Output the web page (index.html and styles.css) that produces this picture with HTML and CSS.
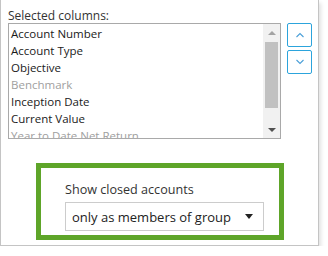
FILE: index.html
```html
<!DOCTYPE html>
<html lang="en">
<head>
    <meta charset="UTF-8">
    <title>Columns</title>
    <link rel="stylesheet" href="styles.css">
</head>
<body>
    <div class="panel">
        <div class="label">Selected columns:</div>
        <div class="top-row">
            <div class="listbox">
                <ul class="items">
                    <li>Account Number</li>
                    <li>Account Type</li>
                    <li>Objective</li>
                    <li class="disabled">Benchmark</li>
                    <li>Inception Date</li>
                    <li>Current Value</li>
                    <li class="disabled">Year to Date Net Return</li>
                </ul>
                <div class="scrollbar">
                    <div class="arrow up"></div>
                    <div class="track"><div class="thumb"></div></div>
                    <div class="arrow down"></div>
                </div>
            </div>
            <div class="move-btns">
                <div class="move-btn">
                    <svg width="10" height="6" viewBox="0 0 10 6"><path d="M1.5 5 L5 1.5 L8.5 5" fill="none" stroke="#4a9fd8" stroke-width="1.1"/></svg>
                </div>
                <div class="move-btn">
                    <svg width="10" height="6" viewBox="0 0 10 6"><path d="M1.5 1 L5 4.5 L8.5 1" fill="none" stroke="#4a9fd8" stroke-width="1.1"/></svg>
                </div>
            </div>
        </div>
        <div class="highlight">
            <div class="field-label">Show closed accounts</div>
            <div class="select">
                <span>only as members of group</span>
                <span class="caret"></span>
            </div>
        </div>
    </div>
</body>
</html>
```
FILE: styles.css
```css
*{
    margin: 0;
    padding: 0;
    box-sizing: border-box;
}
body{
    background-color: #ffffff;
    font-family: "Open Sans", "Noto Sans", sans-serif;
    color: #222;
}
ul{
    list-style-type: none;
}
.panel{
    width: 319px;
    height: 246px;
    border: 1px solid #c4c4c4;
    border-top: none;
    padding: 8px 0 0 7px;
    box-shadow: 2px 3px 4px rgba(0, 0, 0, 0.12);
}
.label{
    font-size: 12px;
    line-height: 15px;
    color: #333;
}
.top-row{
    display: flex;
    gap: 6px;
}
.listbox{
    width: 273px;
    height: 116px;
    border: 1px solid #a9a9a9;
    display: flex;
    overflow: hidden;
}
.items{
    flex: 1;
    padding: 1px 0 0 2px;
    font-size: 11.5px;
    line-height: 17px;
    color: #1a1a1a;
    white-space: nowrap;
    overflow: hidden;
}
.items .disabled{
    color: #a0a0a0;
}
.scrollbar{
    width: 17px;
    background-color: #f1f1f1;
    display: flex;
    flex-direction: column;
}
.arrow{
    height: 17px;
    display: flex;
    align-items: center;
    justify-content: center;
}
.arrow::after{
    content: "";
    border-left: 4px solid transparent;
    border-right: 4px solid transparent;
}
.arrow.up::after{
    border-bottom: 4px solid #a3a3a3;
}
.arrow.down::after{
    border-top: 4px solid #505050;
}
.track{
    flex: 1;
    padding: 1px 2px;
}
.thumb{
    height: 66px;
    background-color: #c1c1c1;
}
.move-btns{
    display: flex;
    flex-direction: column;
    gap: 3px;
}
.move-btn{
    width: 25px;
    height: 24px;
    border: 1px solid #2ca4dc;
    border-radius: 2px;
    display: flex;
    align-items: center;
    justify-content: center;
}
.highlight{
    width: 248px;
    height: 77px;
    margin: 24px 0 0 28px;
    border: 5px solid #5ea529;
    padding: 13px 0 0 24px;
}
.field-label{
    font-size: 12.6px;
    line-height: 17px;
    color: #333;
}
.select{
    width: 199px;
    height: 29px;
    margin-top: 4px;
    border: 1px solid #cccccc;
    padding: 0 10px 0 6px;
    display: flex;
    align-items: center;
    justify-content: space-between;
    font-size: 13px;
    color: #222;
}
.caret{
    border-left: 4px solid transparent;
    border-right: 4px solid transparent;
    border-top: 5px solid #222;
}
```
